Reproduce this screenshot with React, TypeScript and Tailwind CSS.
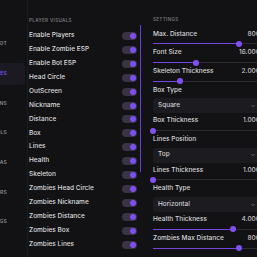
import { ChevronDown } from "lucide-react";

const font = { fontFamily: "Inter, 'Liberation Sans', sans-serif" };

const sections = [
  { label: "AIMBOT" },
  { label: "ENTITIES", active: true },
  { label: "WEAPONS" },
  { label: "TOOLS" },
  { label: "EXTRAS" },
  { label: "COLORS" },
  { label: "SETTINGS" },
];

const visuals = [
  "Enable Players",
  "Enable Zombie ESP",
  "Enable Bot ESP",
  "Head Circle",
  "OutScreen",
  "Nickname",
  "Distance",
  "Box",
  "Lines",
  "Health",
  "Skeleton",
  "Zombies Head Circle",
  "Zombies Nickname",
  "Zombies Distance",
  "Zombies Box",
  "Zombies Lines",
];

type Setting =
  | { kind: "slider"; label: string; value: string; pct: number }
  | { kind: "select"; label: string; value: string };

const settings: Setting[] = [
  { kind: "slider", label: "Max. Distance", value: "800", pct: 80 },
  { kind: "slider", label: "Font Size", value: "16.000", pct: 40 },
  { kind: "slider", label: "Skeleton Thickness", value: "2.000", pct: 25 },
  { kind: "select", label: "Box Type", value: "Square" },
  { kind: "slider", label: "Box Thickness", value: "1.000", pct: 0 },
  { kind: "select", label: "Lines Position", value: "Top" },
  { kind: "slider", label: "Lines Thickness", value: "1.000", pct: 0 },
  { kind: "select", label: "Health Type", value: "Horizontal" },
  { kind: "slider", label: "Health Thickness", value: "4.000", pct: 75 },
  { kind: "slider", label: "Zombies Max Distance", value: "800", pct: 80 },
];

const Toggle = () => (
  <div className="w-[15px] h-[8px] rounded-full bg-[#3a3346] flex items-center justify-end pr-[1px]">
    <div className="w-[6px] h-[6px] rounded-full bg-[#7d4ff0]" />
  </div>
);

const Slider = ({ pct }: { pct: number }) => (
  <div className="h-[9.7px] flex items-center">
    <div className="relative w-full h-[1px] bg-[#2c2b31]">
      <div className="h-full bg-[#7646e0]" style={{ width: `${pct}%` }} />
      <div
        className="absolute top-1/2 w-[6px] h-[6px] -mt-[3px] -ml-[3px] rounded-full bg-[#8150f2]"
        style={{ left: `${pct}%` }}
      />
    </div>
  </div>
);

export default function App() {
  return (
    <div
      className="w-[257px] h-[257px] overflow-hidden bg-[#121214] flex antialiased"
      style={font}
    >
      {/* sidebar */}
      <div className="w-[28px] shrink-0 border-r border-[#1b1b1e] pt-[33px] flex flex-col gap-[7.7px]">
        {sections.map((s) => (
          <div
            key={s.label}
            className={`h-[22px] w-[25px] flex items-center justify-end pr-[18px] overflow-hidden rounded-r-[4px] whitespace-nowrap text-[5px] font-semibold tracking-[0.04em] ${
              s.active ? "bg-[#1b1922] text-[#7c58ee]" : "text-[#8a8a8e]"
            }`}
          >
            {s.label}
          </div>
        ))}
      </div>

      {/* player visuals */}
      <div className="flex shrink-0">
        <div className="w-[109px] pl-[1px]">
          <div className="h-[29px] pt-[18.5px] text-[4.5px] font-semibold tracking-[0.08em] text-[#76767c] leading-none">
            PLAYER VISUALS
          </div>
          {visuals.map((v) => (
            <div
              key={v}
              className="h-[13.93px] flex items-center justify-between text-[6.5px] font-medium text-[#dcdcdf] whitespace-nowrap"
            >
              <span>{v}</span>
              <Toggle />
            </div>
          ))}
        </div>
        <div className="ml-[3px] w-[1px]">
          <div className="mt-[25px] h-[147px] w-[1px] bg-[#6a3fd4]" />
        </div>
      </div>

      {/* settings */}
      <div className="shrink-0 w-[119px] pl-[12px]">
        <div className="h-[30px] pt-[18px] text-[4.5px] font-semibold tracking-[0.08em] text-[#76767c] leading-none">
          SETTINGS
        </div>
        {settings.map((s) =>
          s.kind === "slider" ? (
            <div key={s.label} className="h-[18.7px]">
              <div className="h-[9px] flex items-center justify-between text-[6.5px] font-medium whitespace-nowrap">
                <span className="text-[#d6d6d9]">{s.label}</span>
                <span className="text-[#c4c4c8]">{s.value}</span>
              </div>
              <Slider pct={s.pct} />
            </div>
          ) : (
            <div key={s.label} className="h-[30.7px]">
              <div className="h-[9px] flex items-center text-[6.5px] font-medium text-[#d6d6d9] whitespace-nowrap">
                {s.label}
              </div>
              <div className="mt-[3.2px] h-[15px] rounded-[3px] bg-[#1c1b20] flex items-center justify-between pl-[5px] pr-[4px] text-[6.5px] font-medium text-[#cfcfd3]">
                <span>{s.value}</span>
                <ChevronDown size={6} strokeWidth={2} className="text-[#9a9aa0]" />
              </div>
            </div>
          )
        )}
      </div>
    </div>
  );
}
